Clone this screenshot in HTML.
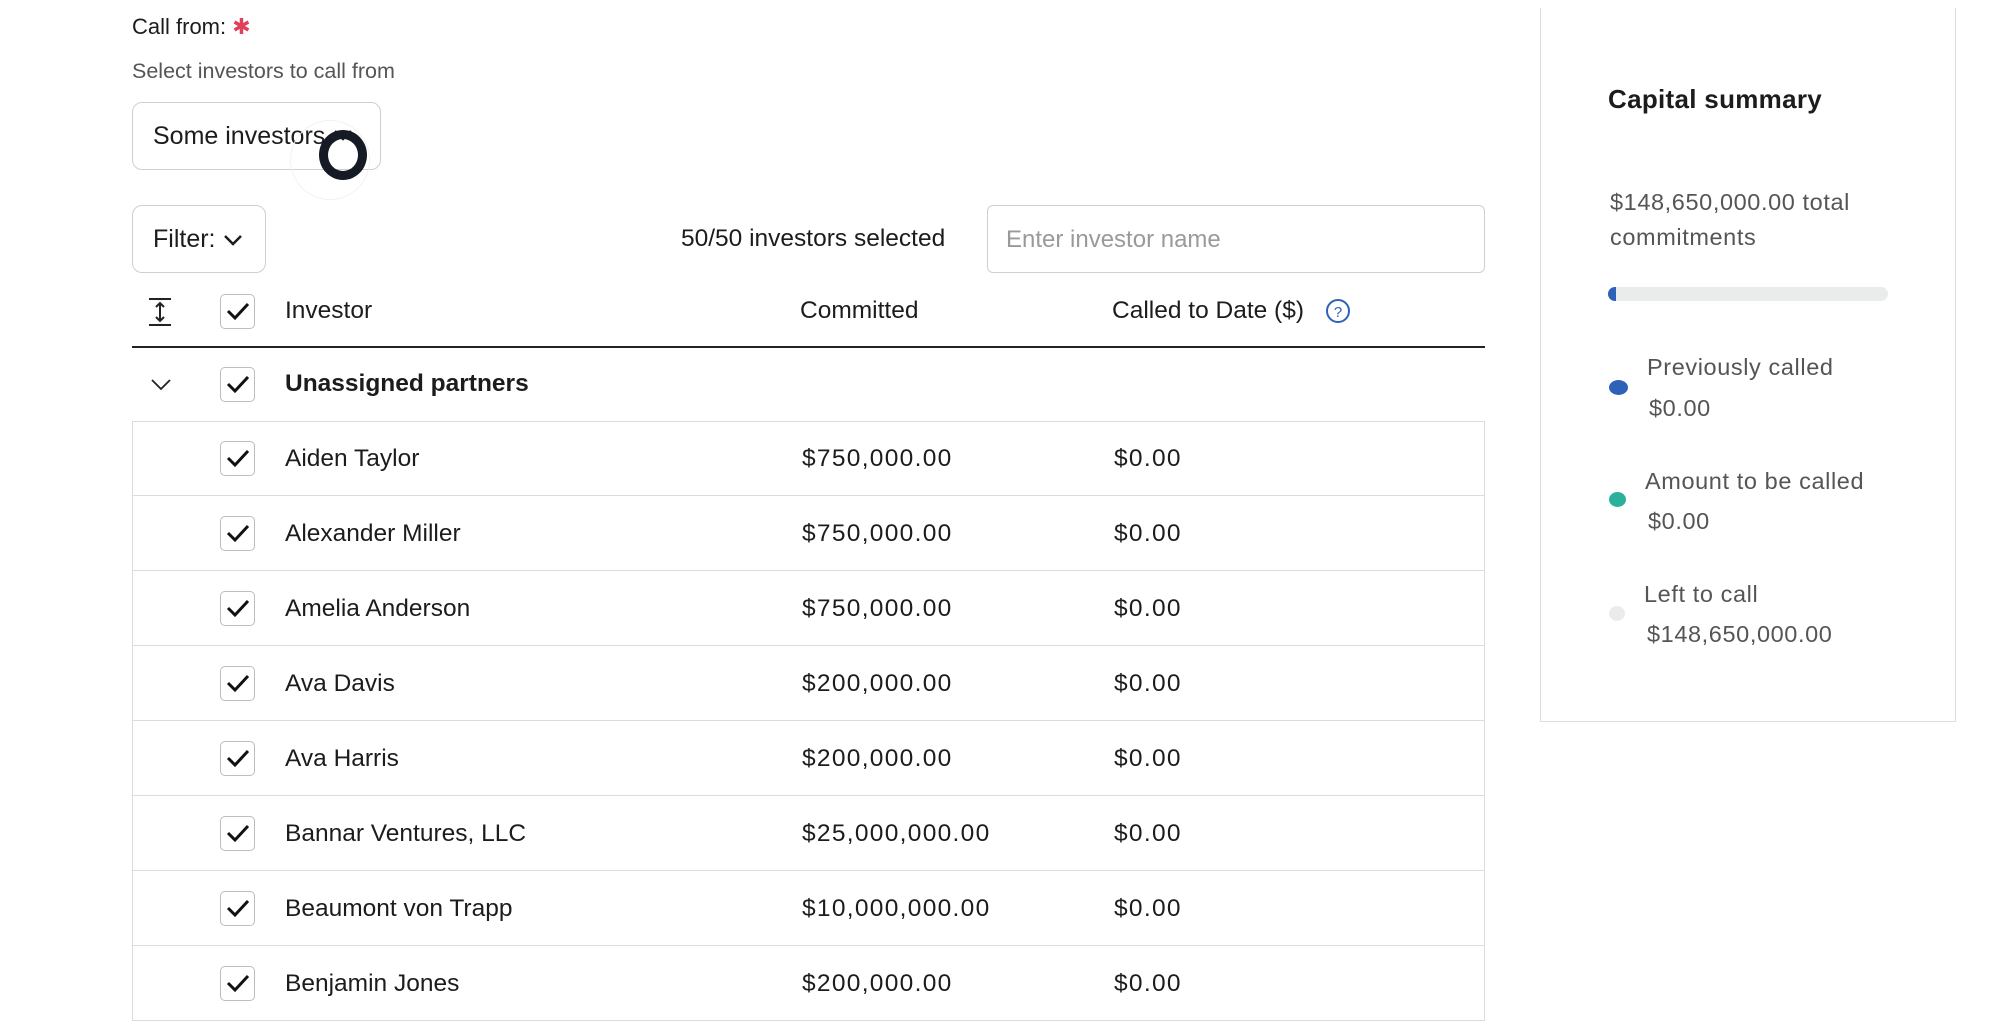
<!DOCTYPE html>
<html><head><meta charset="utf-8"><style>
*{margin:0;padding:0;box-sizing:border-box}
body{width:2008px;height:1004px;overflow:hidden;background:#fff;font-family:"Liberation Sans",sans-serif;color:#1c1c1c;position:relative}
.a{position:absolute;white-space:nowrap}
.box{position:absolute;border:1.5px solid #cfcfcf;border-radius:10px;background:#fff}
.cb{position:absolute;width:35px;height:35px;border:1.5px solid #bdbdbd;border-radius:5px;background:#fff}
.cb svg{position:absolute;left:4px;top:5px}
.row{position:absolute;left:132px;width:1353px;height:75px;border:1px solid #dcdcdc;border-top:none}
.t{font-size:24.5px;line-height:28px}
.n{letter-spacing:1.3px}
.g{color:#555;letter-spacing:0.6px}
</style></head><body>
<div class="a" style="left:132px;top:14px;font-size:22px;line-height:26px">Call from: <span style="color:#e0405a">✱</span></div>
<div class="a" style="left:132px;top:59px;font-size:21.5px;color:#555">Select investors to call from</div>
<div class="box" style="left:132px;top:102px;width:249px;height:68px"></div>
<div class="a" style="left:153px;top:122px;font-size:25px;line-height:28px">Some investors</div>
<svg class="a" style="left:332px;top:127px" width="22" height="16"><path d="M3 4 L11 12 L19 4" stroke="#1c1c1c" stroke-width="2.5" fill="none"/></svg>
<div class="a" style="left:290px;top:120px;width:80px;height:80px;border-radius:50%;border:1px solid #f2f2f2"></div>
<div class="a" style="left:319px;top:130px;width:48px;height:50px;border-radius:50%;border:9px solid #151a24"></div>

<div class="box" style="left:132px;top:205px;width:134px;height:68px"></div>
<div class="a" style="left:153px;top:225px;font-size:25px;line-height:28px">Filter:</div>
<svg class="a" style="left:222px;top:232px" width="22" height="16"><path d="M3 4 L11 12 L19 4" stroke="#1c1c1c" stroke-width="2.5" fill="none"/></svg>
<div class="a t" style="left:681px;top:225px">50/50 investors selected</div>
<div class="box" style="left:987px;top:205px;width:498px;height:68px;border-radius:6px"></div>
<div class="a" style="left:1006px;top:226px;font-size:24px;color:#9a9a9a">Enter investor name</div>

<svg class="a" style="left:146px;top:297px" width="28" height="30"><path d="M3 2 H25 M3 28 H25 M14 6 V24 M10 10 L14 6 L18 10 M10 20 L14 24 L18 20" stroke="#222" stroke-width="2" fill="none"/></svg>
<div class="cb" style="left:220px;top:294px"><svg width="26" height="22"><path d="M3 11 L10 18 L23 4" stroke="#111" stroke-width="3" fill="none"/></svg></div>
<div class="a t" style="left:285px;top:297px">Investor</div>
<div class="a t" style="left:800px;top:297px">Committed</div>
<div class="a t" style="left:1112px;top:297px">Called to Date ($)</div>
<svg class="a" style="left:1325px;top:298px" width="26" height="26"><circle cx="13" cy="13" r="11" stroke="#2d62b8" stroke-width="2" fill="none"/><text x="13" y="19" text-anchor="middle" font-size="15" fill="#2d62b8" font-family="Liberation Sans">?</text></svg>
<div class="a" style="left:132px;top:346px;width:1353px;height:2px;background:#222"></div>

<svg class="a" style="left:150px;top:378px" width="22" height="14"><path d="M2 2 L11 11 L20 2" stroke="#222" stroke-width="1.8" fill="none"/></svg>
<div class="cb" style="left:220px;top:367px"><svg width="26" height="22"><path d="M3 11 L10 18 L23 4" stroke="#111" stroke-width="3" fill="none"/></svg></div>
<div class="a t" style="left:285px;top:370px;font-weight:bold">Unassigned partners</div>
<div class="a" style="left:132px;top:421px;width:1353px;height:1px;background:#dcdcdc"></div>

<div class="row" style="top:421px"></div>
<div class="row" style="top:496px"></div>
<div class="row" style="top:571px"></div>
<div class="row" style="top:646px"></div>
<div class="row" style="top:721px"></div>
<div class="row" style="top:796px"></div>
<div class="row" style="top:871px"></div>
<div class="row" style="top:946px"></div>

<div class="cb" style="left:220px;top:441px"><svg width="26" height="22"><path d="M3 11 L10 18 L23 4" stroke="#111" stroke-width="3" fill="none"/></svg></div>
<div class="a t" style="left:285px;top:445px">Aiden Taylor</div><div class="a t n" style="left:802px;top:445px">$750,000.00</div><div class="a t n" style="left:1114px;top:445px">$0.00</div>
<div class="cb" style="left:220px;top:516px"><svg width="26" height="22"><path d="M3 11 L10 18 L23 4" stroke="#111" stroke-width="3" fill="none"/></svg></div>
<div class="a t" style="left:285px;top:520px">Alexander Miller</div><div class="a t n" style="left:802px;top:520px">$750,000.00</div><div class="a t n" style="left:1114px;top:520px">$0.00</div>
<div class="cb" style="left:220px;top:591px"><svg width="26" height="22"><path d="M3 11 L10 18 L23 4" stroke="#111" stroke-width="3" fill="none"/></svg></div>
<div class="a t" style="left:285px;top:595px">Amelia Anderson</div><div class="a t n" style="left:802px;top:595px">$750,000.00</div><div class="a t n" style="left:1114px;top:595px">$0.00</div>
<div class="cb" style="left:220px;top:666px"><svg width="26" height="22"><path d="M3 11 L10 18 L23 4" stroke="#111" stroke-width="3" fill="none"/></svg></div>
<div class="a t" style="left:285px;top:670px">Ava Davis</div><div class="a t n" style="left:802px;top:670px">$200,000.00</div><div class="a t n" style="left:1114px;top:670px">$0.00</div>
<div class="cb" style="left:220px;top:741px"><svg width="26" height="22"><path d="M3 11 L10 18 L23 4" stroke="#111" stroke-width="3" fill="none"/></svg></div>
<div class="a t" style="left:285px;top:745px">Ava Harris</div><div class="a t n" style="left:802px;top:745px">$200,000.00</div><div class="a t n" style="left:1114px;top:745px">$0.00</div>
<div class="cb" style="left:220px;top:816px"><svg width="26" height="22"><path d="M3 11 L10 18 L23 4" stroke="#111" stroke-width="3" fill="none"/></svg></div>
<div class="a t" style="left:285px;top:820px">Bannar Ventures, LLC</div><div class="a t n" style="left:802px;top:820px">$25,000,000.00</div><div class="a t n" style="left:1114px;top:820px">$0.00</div>
<div class="cb" style="left:220px;top:891px"><svg width="26" height="22"><path d="M3 11 L10 18 L23 4" stroke="#111" stroke-width="3" fill="none"/></svg></div>
<div class="a t" style="left:285px;top:895px">Beaumont von Trapp</div><div class="a t n" style="left:802px;top:895px">$10,000,000.00</div><div class="a t n" style="left:1114px;top:895px">$0.00</div>
<div class="cb" style="left:220px;top:966px"><svg width="26" height="22"><path d="M3 11 L10 18 L23 4" stroke="#111" stroke-width="3" fill="none"/></svg></div>
<div class="a t" style="left:285px;top:970px">Benjamin Jones</div><div class="a t n" style="left:802px;top:970px">$200,000.00</div><div class="a t n" style="left:1114px;top:970px">$0.00</div>

<div class="a" style="left:1540px;top:8px;width:416px;height:714px;border:1.5px solid #dcdcdc;border-top:none"></div>
<div class="a" style="left:1608px;top:84px;font-size:26px;font-weight:bold;color:#1c1c1c;letter-spacing:0.3px">Capital summary</div>
<div class="a g" style="left:1610px;top:185px;font-size:23.5px;line-height:35px">$148,650,000.00 total<br>commitments</div>
<div class="a" style="left:1608px;top:287px;width:280px;height:14px;border-radius:7px;background:#eaebeb"></div>
<div class="a" style="left:1608px;top:287px;width:8px;height:14px;border-radius:7px 0 0 7px;background:#2d62b8"></div>
<div class="a" style="left:1609px;top:380px;width:19px;height:15px;border-radius:50%;background:#2d62b8"></div>
<div class="a g" style="left:1647px;top:354px;font-size:23.5px">Previously called</div>
<div class="a g" style="left:1649px;top:395px;font-size:23.5px">$0.00</div>
<div class="a" style="left:1609px;top:492px;width:17px;height:15px;border-radius:50%;background:#2bb09b"></div>
<div class="a g" style="left:1645px;top:468px;font-size:23.5px">Amount to be called</div>
<div class="a g" style="left:1648px;top:508px;font-size:23.5px">$0.00</div>
<div class="a" style="left:1609px;top:606px;width:16px;height:15px;border-radius:50%;background:#ebebeb"></div>
<div class="a g" style="left:1644px;top:581px;font-size:23.5px">Left to call</div>
<div class="a g" style="left:1647px;top:621px;font-size:23.5px">$148,650,000.00</div>
</body></html>
